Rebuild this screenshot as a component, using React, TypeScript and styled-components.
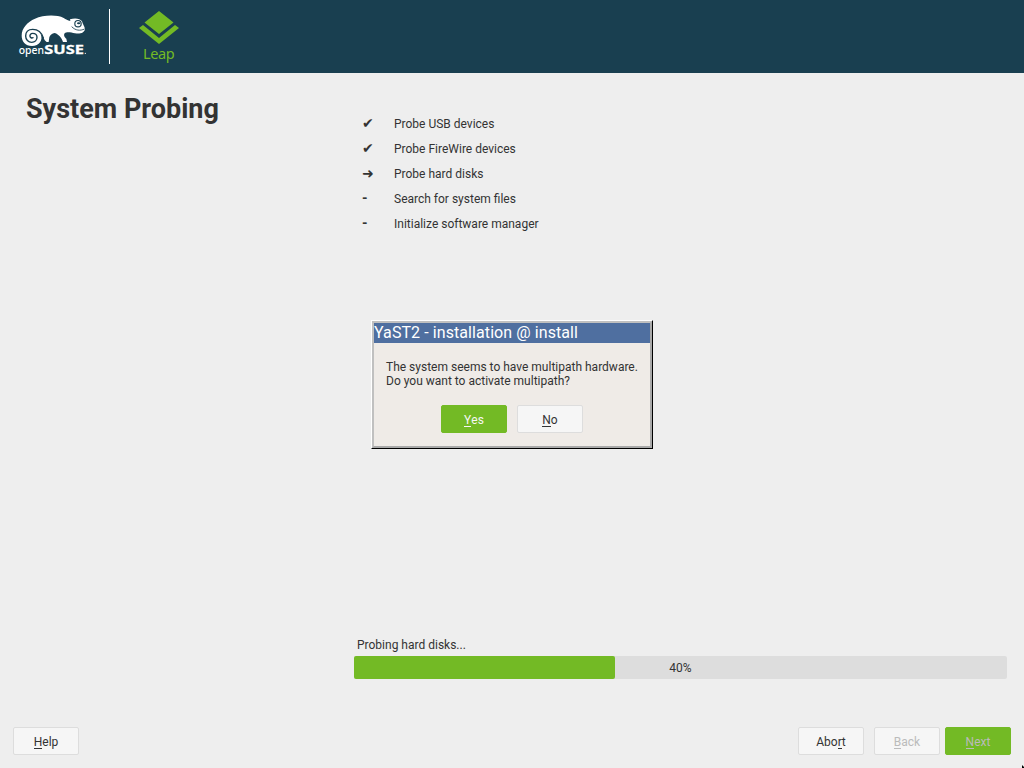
import React from "react";
import styled, { createGlobalStyle } from "styled-components";

const Global = createGlobalStyle`
  *, *::before, *::after { box-sizing: border-box; }
  html, body { margin: 0; padding: 0; overflow: hidden; }
  body {
    background: #eeeeee;
    color: #333333;
    font: 12px/14px Roboto, "Liberation Sans", sans-serif;
  }
`;

const Screen = styled.div`
  position: relative;
  width: 1024px;
  height: 768px;
  display: flex;
  flex-direction: column;
  overflow: hidden;
  background: #eeeeee;
`;

const Header = styled.header`
  flex: none;
  height: 73px;
  display: flex;
  align-items: flex-start;
  background: #193f50;
`;

const SuseMark = styled.svg`
  flex: none;
  width: 90px;
  height: 60px;
  margin: 4px 0 0 10px;
`;

const Divider = styled.div`
  flex: none;
  width: 1px;
  height: 55px;
  margin: 9px 0 0 9px;
  background: #ffffff;
`;

const Product = styled.div`
  width: 40px;
  margin: 11px 0 0 29px;
  display: flex;
  flex-direction: column;
  align-items: center;
  color: #73ba25;
  font: 14.5px/20px "Noto Sans", sans-serif;
`;

const LeapMark = styled.svg`
  display: block;
  width: 40px;
  height: 33px;
`;

const ProductName = styled.span`
  width: 32px;
  margin-top: -1px;
  letter-spacing: -0.35px;
  white-space: nowrap;
`;

const Main = styled.main`
  flex: 1;
  display: grid;
  grid-template-columns: 354px 653px;
`;

const Title = styled.h1`
  margin: 20px 0 0 26px;
  font-size: 27px;
  line-height: 32px;
  font-weight: 700;
`;

const Content = styled.section`
  display: flex;
  flex-direction: column;
  justify-content: space-between;
  padding: 38px 0 0;
`;

const Steps = styled.ul`
  list-style: none;
  margin: 0;
  padding: 0 0 0 8px;
`;

const Step = styled.li`
  display: grid;
  grid-template-columns: 32px auto;
  align-items: center;
  height: 25px;
`;

const Marker = styled.span`
  padding-bottom: 2px;
  font: 700 14px/14px Roboto, "DejaVu Sans", sans-serif;
`;

const ProgressArea = styled.div`
  padding-bottom: 48px;
`;

const ProgressLabel = styled.div`
  padding: 0 3px;
  margin-bottom: 4px;
`;

const Track = styled.div`
  display: grid;
  height: 23px;
  border-radius: 2px;
  background: #dddddd;
  align-items: center;
`;

const Fill = styled.div`
  grid-area: 1 / 1;
  height: 23px;
  border-radius: 2px;
  background: #73ba25;
`;

const Percent = styled.span`
  grid-area: 1 / 1;
  text-align: center;
`;

const Footer = styled.footer`
  flex: none;
  height: 41px;
  display: flex;
  padding: 0 13px;
`;

const Actions = styled.div`
  display: flex;
  margin-left: auto;
`;

const Button = styled.button<{ $primary?: boolean; $gap?: number }>`
  flex: none;
  width: 66px;
  height: 28px;
  margin: 0 0 0 ${(p) => p.$gap ?? 0}px;
  padding: 2px 0 0;
  border: 1px solid ${(p) => (p.$primary ? "#73ba25" : "#dddddd")};
  border-radius: 2px;
  background: ${(p) => (p.$primary ? "#73ba25" : "#f6f6f6")};
  color: ${(p) => (p.$primary ? "#f6f6f6" : "#333333")};
  font: 12px/14px Roboto, "Liberation Sans", sans-serif;
  &:disabled { color: #bbbbbb; }
`;

const Key = styled.span`
  display: inline-block;
  height: 14px;
  box-shadow: inset 0 -1px 0 currentColor;
`;

const Dialog = styled.div`
  position: absolute;
  left: 371px;
  top: 320px;
  width: 282px;
  height: 129px;
  border: 1px solid;
  border-color: #ffffff #000000 #000000 #ffffff;
  background: #efebe7;
`;

const Frame = styled.div`
  height: 127px;
  border: 2px solid;
  border-color: #c0c0c0 #a9a9a9 #a9a9a9 #c0c0c0;
`;

const TitleBar = styled.div`
  height: 20px;
  background: #4f6fa0;
  color: #ffffff;
  font-size: 16px;
  line-height: 19px;
  letter-spacing: 0.08px;
  white-space: nowrap;
`;

const Message = styled.p`
  margin: 17px 0 17px 12px;
  white-space: nowrap;
`;

const DialogActions = styled.div`
  display: flex;
  justify-content: center;
`;

const Pointer = styled.svg`
  position: absolute;
  right: 0;
  bottom: 0;
  width: 2px;
  height: 3px;
`;

const steps = [
  ["✔", "Probe USB devices"],
  ["✔", "Probe FireWire devices"],
  ["➜", "Probe hard disks"],
  ["-", "Search for system files"],
  ["-", "Initialize software manager"],
];

const percent = 40;

function OpenSuseLogo() {
  return (
    <SuseMark viewBox="0 0 270 180" aria-label="openSUSE">
      <path
        fill="#fff"
        d="M66 126C46 126 35 112 35 95C35 72 52 54 75 44C99 33 140 31 161 42C168 46 173 49 181 51L180 46C194 41 211 43 216 52C217 59 224 67 225 76C223 86 211 91 195 88C183 85 170 82 164 88C160 94 164 101 169 104L171 114L159 114C155 102 147 91 134 87C126 88 120 93 118 100L116 114L110 114C100 108 103 99 92 91C100 108 88 126 66 126Z"
      />
      <path
        d="M100 102C94 82 81 76 68 76C54 76 47 85 47 96C47 107 55 115 65 115C75 115 81 108 81 100C81 92 75 88 68 88C62 88 59 93 60 97C61 101 65 103 69 101"
        fill="none"
        stroke="#193f50"
        strokeWidth="4.2"
        strokeLinecap="round"
      />
      <circle cx="204" cy="59" r="9.5" fill="#fff" stroke="#193f50" strokeWidth="3.5" />
      <ellipse cx="206" cy="58" rx="5" ry="3" fill="#193f50" />
      <path d="M224 75C210 81 197 80 185 68" fill="none" stroke="#193f50" strokeWidth="2.5" />
      <text x="26" y="150" fill="#fff" fontFamily="Noto Sans, sans-serif" fontSize="32" fontWeight="500" textLength="76" lengthAdjust="spacingAndGlyphs">open</text>
      <text x="103" y="149" fill="#fff" stroke="#fff" strokeWidth="0.8" fontFamily="Noto Sans, sans-serif" fontSize="37" fontWeight="700" textLength="119" lengthAdjust="spacingAndGlyphs">SUSE</text>
      <circle cx="226" cy="148" r="2" fill="#fff" />
    </SuseMark>
  );
}

export default function App() {
  return (
    <>
      <Global />
      <Screen>
        <Header>
          <OpenSuseLogo />
          <Divider />
          <Product>
            <LeapMark viewBox="0 0 40 33">
              <path fill="#73ba25" d="M20 0L34.5 11.5L20 23L5.500 11.500ZM4 14L20 27L36 14L40 17L20 33L0 17Z" />
            </LeapMark>
            <ProductName>Leap</ProductName>
          </Product>
        </Header>
        <Main>
          <Title>System Probing</Title>
          <Content>
            <Steps>
              {steps.map(([mark, label]) => (
                <Step key={label}>
                  <Marker>{mark}</Marker>
                  <span>{label}</span>
                </Step>
              ))}
            </Steps>
            <ProgressArea>
              <ProgressLabel>Probing hard disks...</ProgressLabel>
              <Track>
                <Fill style={{ width: `${percent}%` }} />
                <Percent>{percent}%</Percent>
              </Track>
            </ProgressArea>
          </Content>
        </Main>
        <Footer>
          <Button><Key>H</Key>elp</Button>
          <Actions>
            <Button>Abo<Key>r</Key>t</Button>
            <Button $gap={10} disabled><Key>B</Key>ack</Button>
            <Button $gap={5} $primary disabled><Key>N</Key>ext</Button>
          </Actions>
        </Footer>
        <Dialog role="dialog">
          <Frame>
            <TitleBar>YaST2 - installation @ install</TitleBar>
            <Message>
              The system seems to have multipath hardware.
              <br />
              Do you want to activate multipath?
            </Message>
            <DialogActions>
              <Button $primary><Key>Y</Key>es</Button>
              <Button $gap={10}><Key>N</Key>o</Button>
            </DialogActions>
          </Frame>
        </Dialog>
        <Pointer viewBox="0 0 2 3">
          <path d="M0 0L2 2V3H0Z" fill="#000" />
        </Pointer>
      </Screen>
    </>
  );
}
